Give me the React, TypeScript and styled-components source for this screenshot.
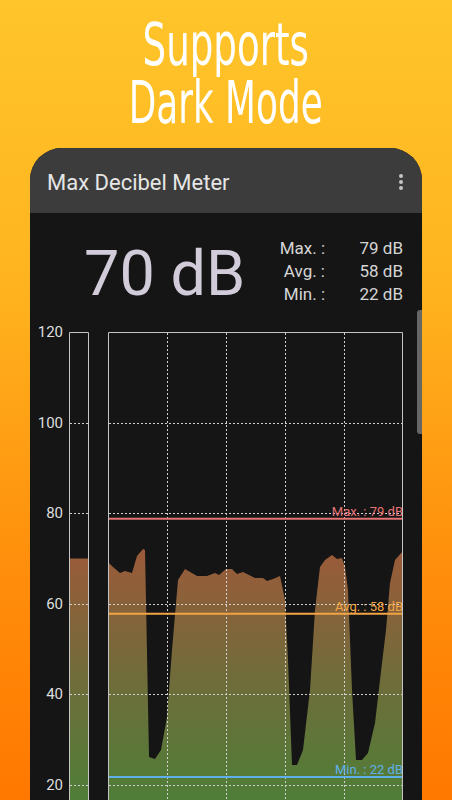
import styled, { createGlobalStyle } from "styled-components";

const GlobalStyle = createGlobalStyle`
	html, body {
		margin: 0;
		padding: 0;
	}
	body {
		height: 800px;
		overflow: hidden;
		background: linear-gradient(180deg, #ffc52b 0%, #ffb41f 35%, #ff8f0c 70%, #ff7800 100%);
		font-family: Roboto, "Noto Sans", sans-serif;
	}
`;

const Page = styled.div`
	display: flex;
	flex-direction: column;
	align-items: center;
	height: 800px;
	overflow: hidden;
`;

const Headline = styled.h1`
	margin: 0;
	padding-top: 16px;
	color: #ffffff;
	font-family: "DejaVu Sans Condensed", "DejaVu Sans", sans-serif;
	font-weight: normal;
	font-size: 59px;
	line-height: 58px;
	text-align: center;
`;

const HeadLine = styled.span<{ $squeeze: number }>`
	display: block;
	height: 58px;
	transform: scaleX(${(p) => p.$squeeze});
	white-space: nowrap;
`;

const Phone = styled.div`
	position: relative;
	flex: 1;
	width: 392px;
	margin-top: 16px;
	display: flex;
	flex-direction: column;
	background: #151515;
	border-radius: 32px 32px 0 0;
	overflow: hidden;
`;

const AppBar = styled.div`
	display: flex;
	align-items: center;
	justify-content: space-between;
	height: 65px;
	padding: 3px 19px 0 17px;
	box-sizing: border-box;
	background: #3c3c3c;
	color: #e6e6e6;
	font-size: 22px;
`;

const MenuDots = styled.div`
	display: flex;
	flex-direction: column;
	gap: 2px;
	margin-top: -1px;

	i {
		width: 4px;
		height: 4px;
		border-radius: 50%;
		background: #c4c4c4;
	}
`;

const Readout = styled.div`
	display: flex;
	align-items: flex-start;
	height: 105px;
	padding: 0 19px 0 54px;
	color: #d0cad6;
`;

const BigLevel = styled.div`
	margin-top: 29px;
	font-size: 63px;
	line-height: 63px;
	color: #d2cbd9;
`;

const Stats = styled.div`
	display: grid;
	grid-template-columns: auto 78px;
	margin-left: auto;
	margin-top: 24px;
	font-size: 17px;
	line-height: 23px;
	color: #d6d6d6;
	text-align: right;
`;

const ScrollThumb = styled.div`
	position: absolute;
	right: 0;
	top: 162px;
	width: 5px;
	height: 124px;
	border-radius: 3px 0 0 3px;
	background: #666666;
`;

const ChartSvg = styled.svg`
	display: block;
	width: 392px;
	height: 482px;
	font-family: Roboto, "Noto Sans", sans-serif;
`;

// page coords: dB -> y
const yOf = (db: number) => 332 + (120 - db) * 4.53;

const wave: [number, number][] = [
	[108, 562], [113, 567], [120, 573], [125, 571], [132, 573], [137, 556], [143, 549], [145, 550],
	[149, 757], [155, 759], [161, 750], [167, 717], [172, 650], [178, 580], [185, 569], [197, 576],
	[207, 576], [215, 573], [219, 575], [226, 569], [232, 569], [237, 574], [243, 572], [255, 578],
	[263, 578], [267, 581], [273, 579], [280, 576], [285, 600], [288, 660], [292, 765], [297, 765],
	[303, 750], [310, 690], [315, 610], [320, 567], [325, 560], [332, 555], [337, 559], [342, 558],
	[345, 567], [348, 590], [352, 690], [356, 760], [362, 760], [368, 753], [375, 723], [380, 680],
	[386, 630], [390, 583], [395, 560], [403, 551],
];

const wavePath =
	"M108 830 " + wave.map(([x, y]) => `L${x} ${y}`).join(" ") + " L403 830 Z";

const ticks = [120, 100, 80, 60, 40, 20];
const columns = [167, 226, 285, 344];

const refLines = [
	{ label: "Max. : 79 dB", db: 79, color: "#e57373" },
	{ label: "Avg. : 58 dB", db: 58, color: "#f2a444" },
	{ label: "Min. : 22 dB", db: 22, color: "#5fb0ea" },
];

const Chart = () => {
	return (
		<ChartSvg viewBox="30 318 392 482">
			<defs>
				<linearGradient id="levelFill" gradientUnits="userSpaceOnUse" x1="0" y1="548" x2="0" y2="800">
					<stop offset="0" stopColor="#9c5a3a" />
					<stop offset="0.5" stopColor="#716c3a" />
					<stop offset="1" stopColor="#4f7e38" />
				</linearGradient>
			</defs>

			{ticks.map((t) => (
				<text key={t} x={63} y={yOf(t) + 5} fontSize={15} fill="#dedede" textAnchor="end">
					{t}
				</text>
			))}

			<rect x={70} y={yOf(70)} width={18} height={300} fill="url(#levelFill)" />
			<path d={wavePath} fill="url(#levelFill)" />

			{ticks.slice(1).map((t) => (
				<g key={t} stroke="#d0d0d0" strokeWidth={1} strokeDasharray="2 2">
					<line x1={70} x2={88} y1={Math.round(yOf(t)) + 0.5} y2={Math.round(yOf(t)) + 0.5} />
					<line x1={109} x2={402} y1={Math.round(yOf(t)) + 0.5} y2={Math.round(yOf(t)) + 0.5} />
				</g>
			))}
			{columns.map((x) => (
				<line key={x} x1={x + 0.5} x2={x + 0.5} y1={333} y2={830} stroke="#d0d0d0" strokeDasharray="2 2" />
			))}

			{refLines.map((r) => (
				<g key={r.db}>
					<line x1={108} x2={403} y1={yOf(r.db) + 1} y2={yOf(r.db) + 1} stroke={r.color} strokeWidth={2} />
					<text x={403} y={yOf(r.db) - 2} fontSize={13} fill={r.color} textAnchor="end">
						{r.label}
					</text>
				</g>
			))}

			<path d="M69.5 830 V332.5 H88.5 V830" fill="none" stroke="#c4c4c4" strokeWidth={1} />
			<path d="M108.5 830 V332.5 H402.5 V830" fill="none" stroke="#c4c4c4" strokeWidth={1} />
		</ChartSvg>
	);
};

const App = () => {
	return (
		<>
			<GlobalStyle />
			<Page>
				<Headline>
					<HeadLine $squeeze={0.7}>Supports</HeadLine>
					<HeadLine $squeeze={0.675}>Dark Mode</HeadLine>
				</Headline>
				<Phone>
					<AppBar>
						<span>Max Decibel Meter</span>
						<MenuDots>
							<i />
							<i />
							<i />
						</MenuDots>
					</AppBar>
					<Readout>
						<BigLevel>70 dB</BigLevel>
						<Stats>
							<span>Max. :</span>
							<span>79 dB</span>
							<span>Avg. :</span>
							<span>58 dB</span>
							<span>Min. :</span>
							<span>22 dB</span>
						</Stats>
					</Readout>
					<Chart />
					<ScrollThumb />
				</Phone>
			</Page>
		</>
	);
};

export default App;
